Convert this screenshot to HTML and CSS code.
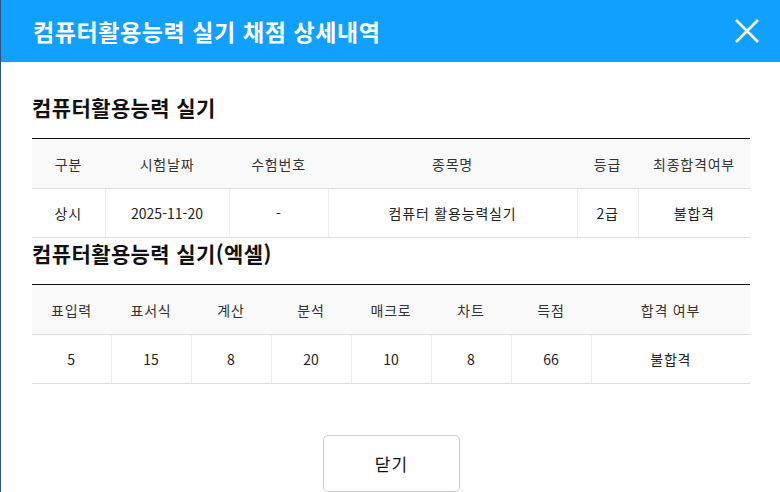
FILE: index.html
```html
<!DOCTYPE html>
<html lang="ko">
<head>
<meta charset="utf-8">
<link rel="stylesheet" href="styles.css">
</head>
<body>
<div class="modal">
  <div class="modal-head">
    <h2 class="modal-title">컴퓨터활용능력 실기 채점 상세내역</h2>
    <button class="close" aria-label="닫기">
      <svg width="26" height="26" viewBox="0 0 26 26"><path d="M2 2 L24 24 M24 2 L2 24" stroke="#fff" stroke-width="2.6" fill="none"/></svg>
    </button>
  </div>
  <div class="modal-body">
    <h3 class="sec-title">컴퓨터활용능력 실기</h3>
    <table class="grid">
      <colgroup><col style="width:73px"><col style="width:124px"><col style="width:99px"><col style="width:249px"><col style="width:61px"><col style="width:112px"></colgroup>
      <thead><tr><th>구분</th><th>시험날짜</th><th>수험번호</th><th>종목명</th><th>등급</th><th>최종합격여부</th></tr></thead>
      <tbody><tr><td class="ko">상시</td><td>2025-11-20</td><td>-</td><td class="ko">컴퓨터 활용능력실기</td><td class="ko">2급</td><td class="ko">불합격</td></tr></tbody>
    </table>
    <h3 class="sec-title">컴퓨터활용능력 실기(엑셀)</h3>
    <table class="grid">
      <colgroup><col style="width:79px"><col style="width:80px"><col style="width:80px"><col style="width:80px"><col style="width:80px"><col style="width:80px"><col style="width:80px"><col style="width:159px"></colgroup>
      <thead><tr><th>표입력</th><th>표서식</th><th>계산</th><th>분석</th><th>매크로</th><th>차트</th><th>득점</th><th>합격 여부</th></tr></thead>
      <tbody><tr><td>5</td><td>15</td><td>8</td><td>20</td><td>10</td><td>8</td><td>66</td><td class="ko">불합격</td></tr></tbody>
    </table>
    <div class="actions"><button class="btn">닫기</button></div>
  </div>
</div>
</body>
</html>
```
FILE: styles.css
```css
* { box-sizing: border-box; }
html, body { margin: 0; padding: 0; }
body {
  background: #2f5283;
  font-family: "Noto Sans CJK KR", "Noto Sans", sans-serif;
  width: 780px;
  height: 492px;
  overflow: hidden;
}
.modal {
  margin-left: 1px;
  background: #fff;
  height: 492px;
}
.modal-head {
  height: 62px;
  background: #12a0ff;
  display: flex;
  align-items: center;
  justify-content: space-between;
  padding: 0 20px 0 32px;
}
.modal-title {
  margin: 0;
  color: #fff;
  font-size: 23px;
  font-weight: 700;
  letter-spacing: 0.6px;
}
.close {
  background: none;
  border: 0;
  padding: 0;
  width: 26px;
  height: 26px;
  display: flex;
}
.modal-body {
  padding: 30px 29px 0 31px;
}
.sec-title {
  margin: 0 0 16px;
  height: 30px;
  line-height: 30px;
  font-size: 21px;
  font-weight: 700;
  letter-spacing: 0.4px;
  color: #111;
}
.grid {
  width: 718px;
  table-layout: fixed;
  border-collapse: collapse;
  border-top: 1px solid #111;
}
.grid th, .grid td {
  padding: 0;
  text-align: center;
  font-size: 14px;
  font-weight: 400;
  border-bottom: 1px solid #ddd;
}
.grid th {
  height: 50px;
  background: #f9f9f9;
  color: #333;
  letter-spacing: 0.8px;
}
.grid td {
  height: 49px;
  color: #222;
  border-left: 1px solid #eee;
}
.grid td.ko { letter-spacing: 0.8px; }
.grid td:first-child { border-left: 0; }
.actions {
  display: flex;
  justify-content: center;
  padding-top: 51px;
}
.btn {
  width: 137px;
  height: 57px;
  background: #fff;
  border: 1px solid #ccc;
  border-radius: 5px;
  font-family: inherit;
  font-size: 17px;
  letter-spacing: 1px;
  color: #111;
}
```
